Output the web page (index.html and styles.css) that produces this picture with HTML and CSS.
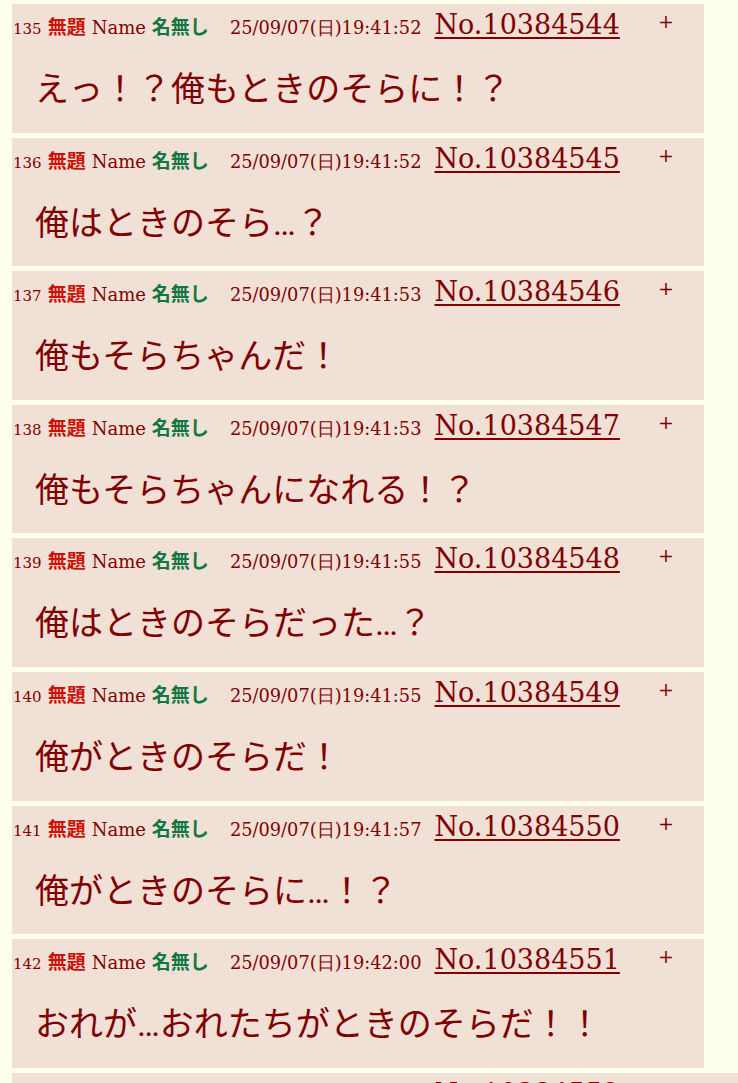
FILE: index.html
```html
<!DOCTYPE html>
<html lang="ja">
<head>
<meta charset="utf-8">
<link rel="stylesheet" href="styles.css">
</head>
<body>
<div class="thread">
  <div class="post">
    <div class="head"><span class="num">135</span><span class="sub">無題</span><span class="nm">Name</span><span class="name">名無し</span><span class="date">25/09/07(日)19:41:52</span><a class="no">No.10384544</a><span class="plus">+</span></div>
    <div class="body">えっ！？俺もときのそらに！？</div>
  </div>
  <div class="post">
    <div class="head"><span class="num">136</span><span class="sub">無題</span><span class="nm">Name</span><span class="name">名無し</span><span class="date">25/09/07(日)19:41:52</span><a class="no">No.10384545</a><span class="plus">+</span></div>
    <div class="body">俺はときのそら…？</div>
  </div>
  <div class="post">
    <div class="head"><span class="num">137</span><span class="sub">無題</span><span class="nm">Name</span><span class="name">名無し</span><span class="date">25/09/07(日)19:41:53</span><a class="no">No.10384546</a><span class="plus">+</span></div>
    <div class="body">俺もそらちゃんだ！</div>
  </div>
  <div class="post">
    <div class="head"><span class="num">138</span><span class="sub">無題</span><span class="nm">Name</span><span class="name">名無し</span><span class="date">25/09/07(日)19:41:53</span><a class="no">No.10384547</a><span class="plus">+</span></div>
    <div class="body">俺もそらちゃんになれる！？</div>
  </div>
  <div class="post">
    <div class="head"><span class="num">139</span><span class="sub">無題</span><span class="nm">Name</span><span class="name">名無し</span><span class="date">25/09/07(日)19:41:55</span><a class="no">No.10384548</a><span class="plus">+</span></div>
    <div class="body">俺はときのそらだった…？</div>
  </div>
  <div class="post">
    <div class="head"><span class="num">140</span><span class="sub">無題</span><span class="nm">Name</span><span class="name">名無し</span><span class="date">25/09/07(日)19:41:55</span><a class="no">No.10384549</a><span class="plus">+</span></div>
    <div class="body">俺がときのそらだ！</div>
  </div>
  <div class="post">
    <div class="head"><span class="num">141</span><span class="sub">無題</span><span class="nm">Name</span><span class="name">名無し</span><span class="date">25/09/07(日)19:41:57</span><a class="no">No.10384550</a><span class="plus">+</span></div>
    <div class="body">俺がときのそらに…！？</div>
  </div>
  <div class="post">
    <div class="head"><span class="num">142</span><span class="sub">無題</span><span class="nm">Name</span><span class="name">名無し</span><span class="date">25/09/07(日)19:42:00</span><a class="no">No.10384551</a><span class="plus">+</span></div>
    <div class="body">おれが…おれたちがときのそらだ！！</div>
  </div>
  <div class="post wide">
    <div class="head"><span class="num">143</span><span class="sub">無題</span><span class="nm">Name</span><span class="name">名無し</span><span class="date">25/09/07(日)19:42:01</span><a class="no">No.10384552</a><span class="plus">+</span></div>
    <div class="body">俺もときのそらだ！</div>
  </div>
</div>
</body>
</html>
```
FILE: styles.css
```css
html, body {
  margin: 0;
  padding: 0;
  background: #FFFFEE;
  overflow: hidden;
}
.thread {
  display: flex;
  flex-direction: column;
  gap: 5px;
  padding: 4px 0 0 12px;
  color: #800000;
}
.post {
  width: 692px;
  height: 128.6px;
  box-sizing: border-box;
  background: #F0E0D6;
  padding: 3px 0 0 1px;
  flex-shrink: 0;
}
.post.wide {
  width: 740px;
}
.head {
  display: flex;
  align-items: baseline;
  height: 36px;
  line-height: 36px;
  font-family: "DejaVu Serif", serif;
  white-space: nowrap;
}
.num {
  font-size: 15px;
}
.sub {
  margin-left: 6px;
  font-family: "Noto Sans CJK JP", sans-serif;
  font-weight: 700;
  font-size: 19px;
  color: #CC1105;
}
.nm {
  margin-left: 6px;
  font-size: 18px;
}
.name {
  margin-left: 6px;
  font-family: "Noto Sans CJK JP", sans-serif;
  font-weight: 700;
  font-size: 19px;
  color: #117743;
}
.date {
  margin-left: 21px;
  font-size: 17.8px;
}
.no {
  margin-left: 13px;
  font-size: 27px;
  color: #800000;
  text-decoration: underline;
  text-decoration-thickness: 2px;
  text-underline-offset: 3px;
}
.plus {
  margin-left: 38px;
  align-self: flex-start;
  line-height: 29px;
  font-size: 19px;
}
.body {
  margin: 22px 0 0 22px;
  font-family: Roboto, "Noto Sans CJK JP", sans-serif;
  font-size: 34px;
  line-height: 48px;
  white-space: nowrap;
}
```
